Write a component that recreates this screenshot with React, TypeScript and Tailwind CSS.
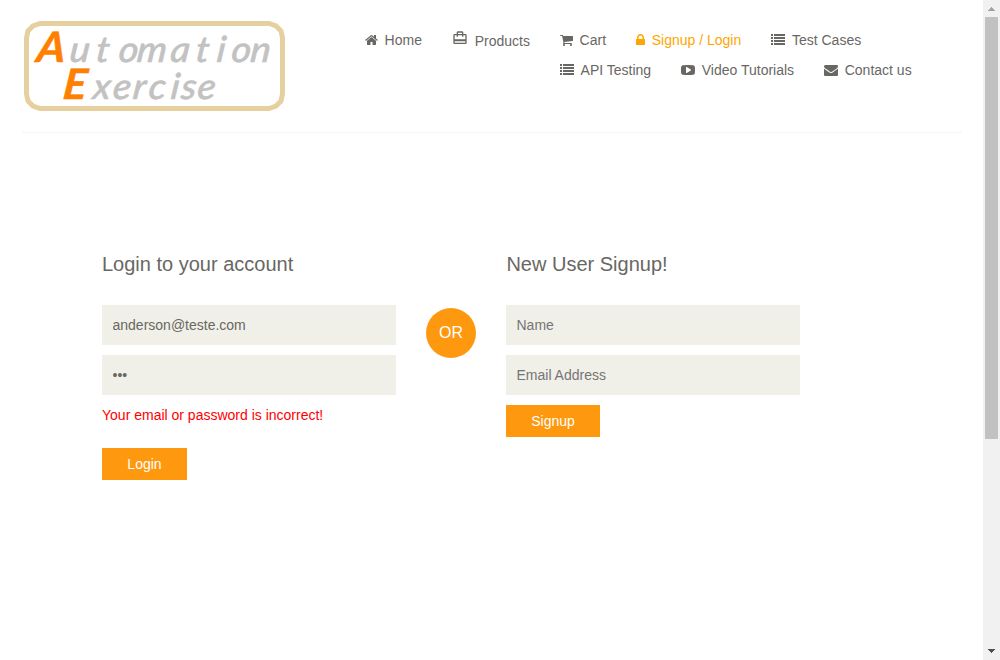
import type { ReactNode } from "react";

function Glyph({ d, width }: { d: string; width: number }) {
  return (
    <svg width={width} height={14} viewBox={`0 0 ${width * 128} 1792`} fill="currentColor" className="shrink-0">
      <path d={d} />
    </svg>
  );
}

const HOME =
  "M1408 992v480q0 26-19 45t-45 19h-384v-384h-256v384h-384q-26 0-45-19t-19-45v-480q0-1 .5-3t.5-3l575-474 575 474q1 2 1 6zm223-69l-62 74q-8 9-21 11h-3q-13 0-21-7l-692-577-692 577q-12 8-24 7-13-2-21-11l-62-74q-8-10-7-23.5t11-21.5l719-599q32-26 76-26t76 26l244 204v-195q0-14 9-23t23-9h192q14 0 23 9t9 23v408l219 182q10 8 11 21.5t-7 23.5z";
const CART =
  "M640 1536q0 52-38 90t-90 38-90-38-38-90 38-90 90-38 90 38 38 90zm896 0q0 52-38 90t-90 38-90-38-38-90 38-90 90-38 90 38 38 90zm128-1088v512q0 24-16.5 42.500t-40.500 21.500l-1044 122q13 60 13 70 0 16-24 64h920q26 0 45 19t19 45-19 45-45 19h-1024q-26 0-45-19t-19-45q0-11 8-31.500t16-36 21.500-40 15.500-29.500l-177-823h-204q-26 0-45-19t-19-45 19-45 45-19h256q16 0 28.500 6.500t19.500 15.500 13 24.500 8 26 5.500 29.500 4.500 26h1201q26 0 45 19t19 45z";
const LOCK =
  "M320 768h512v-192q0-106-75-181t-181-75-181 75-75 181v192zm832 96v576q0 40-28 68t-68 28h-960q-40 0-68-28t-28-68v-576q0-40 28-68t68-28h32v-192q0-184 132-316t316-132 316 132 132 316v192h32q40 0 68 28t28 68z";
const LIST =
  "M0 1280h256v256H0zM0 896h256v256H0zM0 512h256v256H0zM0 128h256v256H0zM384 1280h1408v256H384zM384 896h1408v256H384zM384 512h1408v256H384zM384 128h1408v256H384z";
const VIDEO =
  "M1280 896q0-37-30-54l-512-320q-31-20-65-2-33 18-33 56v640q0 38 33 56 16 8 31 8 20 0 34-10l512-320q30-17 30-54zm512 0q0 96-1 150t-8.500 136.500-22.500 147.500q-16 73-69 123t-124 58q-222 25-671 25t-671-25q-71-8-124.500-58t-69.500-123q-14-65-21.500-147.500t-8.500-136.500-1-150 1-150 8.500-136.500 22.500-147.500q16-73 69-123t124-58q222-25 671-25t671 25q71 8 124.500 58t69.500 123q14 65 21.500 147.500t8.500 136.500 1 150z";
const MAIL =
  "M1792 710v794q0 66-47 113t-113 47h-1472q-66 0-113-47t-47-113v-794q44 49 101 87 362 246 497 345 57 42 92.500 65.500t94.500 48 110 24.500h2q51 0 110-24.500t94.500-48 92.500-65.500q170-123 498-345 57-39 100-87zm0-294q0 79-49 151t-122 123q-376 261-468 325-10 7-42.500 31t-54 38.500-52 32.500-57.500 27-50 9h-2q-23 0-50-9t-57.500-27-52-32.500-54-38.500-42.500-31q-91-64-262-182.500t-205-142.500q-62-42-117-115.500t-55-136.500q0-78 41.500-130t118.500-52h1472q65 0 112.500 47t47.500 113z";

function NavItem({ icon, label, active }: { icon: ReactNode; label: string; active?: boolean }) {
  return (
    <a className={`flex h-5 items-center gap-[6.6px] whitespace-nowrap ${active ? "text-[#ffa500]" : "text-[#696763]"}`}>
      {icon}
      <span>{label}</span>
    </a>
  );
}

function Logo() {
  return (
    <svg width="262" height="90" viewBox="0 0 262 90" className="block" fontFamily="Lato, sans-serif" fontStyle="italic">
      <path
        d="M16 2.500H245L252 5L257 10L258.500 17V73L257 80L252 85L245 87.500H16L9 85L4 80L2.500 73V17L4 10L9 5Z"
        fill="#fff"
        stroke="#e6d0a0"
        strokeWidth="5"
      />
      <g transform="scale(1.05 1) skewX(-6)" fill="#c2c2c2" stroke="#c2c2c2" strokeWidth=".5">
        <text y="41" fontSize="36" fontWeight="500">
          <tspan x="15.5" fontSize="42" fontWeight="700" fill="#ff8000" stroke="#ff8000">A</tspan>
          <tspan x="47 72 93.5 111 143 167 187 201 219">utomation</tspan>
        </text>
        <text y="78" fontSize="36" fontWeight="500">
          <tspan x="44.5" fontSize="42" fontWeight="700" fill="#ff8000" stroke="#ff8000">E</tspan>
          <tspan x="73 92 111 126 147 157 172.5">xercise</tspan>
        </text>
      </g>
    </svg>
  );
}

const field = "block h-10 w-[294px] bg-[#f0f0e9] pr-2.5 pl-[10.5px] text-sm text-[#696763] outline-none placeholder:text-[#757575]";
const button = "block h-8 bg-[#fe980f] text-center text-sm text-white";

function Scrollbar() {
  return (
    <div className="flex h-full w-[17px] shrink-0 flex-col items-center bg-[#f1f1f1]">
      <svg width="17" height="17" viewBox="0 0 17 17" shapeRendering="crispEdges">
        <path d="M8 7h1v1h1v1h1v1h1v1H5v-1h1V9h1V8h1z" fill="#a3a3a3" />
      </svg>
      <div className="h-[422px] w-[13px] bg-[#c1c1c1]" />
      <svg width="17" height="17" viewBox="0 0 17 17" shapeRendering="crispEdges" className="mt-auto">
        <path d="M5 6h7v1h-1v1h-1v1H9v1H8V9H7V8H6V7H5z" fill="#505050" />
      </svg>
    </div>
  );
}

export default function App() {
  return (
    <div className="flex h-[660px] w-[1000px] overflow-hidden bg-white font-['Liberation_Sans',Arial,sans-serif] text-sm text-[#696763]">
      <div className="flex-1">
        <header className="ml-[22px] flex h-[133px] w-[940px] border-b border-[#f5f5f5] pt-[21px] pl-[2px]">
          <Logo />
          <nav className="ml-[79px] flex flex-col gap-2.5 pt-[9px]">
            <div className="flex gap-[30.1px]">
              <NavItem icon={<Glyph d={HOME} width={13} />} label="Home" />
              <a className="flex h-5 gap-[6.6px]">
                <svg width="16" height="16" viewBox="0 0 24 24" fill="currentColor">
                  <path d="M20 6h-3V4c0-1.110-.89-2-2-2H9c-1.110 0-2 .89-2 2v2H4c-1.110 0-2 .89-2 2v11c0 1.110.89 2 2 2h16c1.110 0 2-.89 2-2V8c0-1.110-.89-2-2-2zM9 4h6v2H9V4zm11 15H4v-2h16v2zm0-5H4V8h3v2h2V8h6v2h2V8h3v6z" />
                </svg>
                <span className="pt-px">Products</span>
              </a>
              <NavItem icon={<Glyph d={CART} width={13} />} label="Cart" />
              <NavItem icon={<Glyph d={LOCK} width={9} />} label="Signup / Login" active />
              <NavItem icon={<Glyph d={LIST} width={14} />} label="Test Cases" />
            </div>
            <div className="flex gap-[30px] pl-[195px]">
              <NavItem icon={<Glyph d={LIST} width={14} />} label="API Testing" />
              <NavItem icon={<Glyph d={VIDEO} width={14} />} label="Video Tutorials" />
              <NavItem icon={<Glyph d={MAIL} width={14} />} label="Contact us" />
            </div>
          </nav>
        </header>
        <main className="flex pt-[120px] pl-[102px]">
          <form className="w-[294px]">
            <h2 className="mb-[30px] text-xl leading-[22px]">Login to your account</h2>
            <input className={field} type="email" defaultValue="anderson@teste.com" />
            <input className={`${field} mt-2.5`} type="password" defaultValue="abc" />
            <p className="mt-2.5 leading-5 text-[#ff0000]">Your email or password is incorrect!</p>
            <button type="button" className={`${button} mt-[23px] w-[85px]`}>Login</button>
          </form>
          <div className="mx-[30px] mt-[55px] h-[50px] w-[50px] rounded-full bg-[#fe980f] text-center text-base leading-[50px] text-white">
            OR
          </div>
          <form className="w-[294px]">
            <h2 className="mb-[30px] pl-[0.4px] text-xl leading-[22px]">New User Signup!</h2>
            <input className={field} type="text" placeholder="Name" />
            <input className={`${field} mt-2.5`} type="email" placeholder="Email Address" />
            <button type="button" className={`${button} mt-2.5 w-[94px]`}>Signup</button>
          </form>
        </main>
      </div>
      <Scrollbar />
    </div>
  );
}
